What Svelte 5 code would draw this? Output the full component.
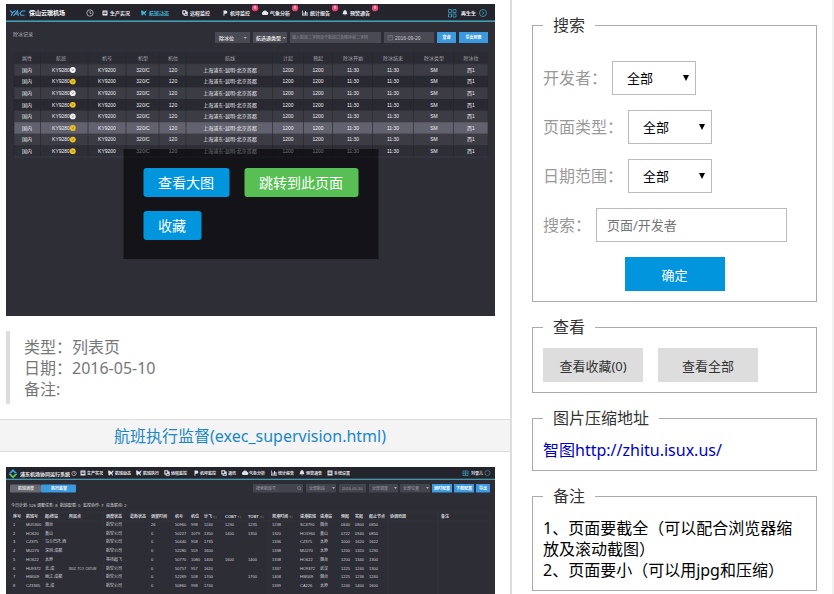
<script>
  const nav = [
    { x: 110, text: '生产实况', icon: 'list' },
    { x: 149, text: '航班动态', icon: 'plane', active: true },
    { x: 190, text: '远程监控', icon: 'copy' },
    { x: 230, text: '机坪监控', icon: 'flag', badge: true },
    { x: 270, text: '气象分析', icon: 'cloud', badge: true },
    { x: 310, text: '统计报告', icon: 'chart', badge: true },
    { x: 350, text: '预警通告', icon: 'bell', badge: true }
  ];
  const columns = [
    { x: 27, head: '属性', cell: '国内' },
    { x: 61, head: '航班', cell: 'KY9280' },
    { x: 107, head: '机号', cell: 'KY9200' },
    { x: 143, head: '机型', cell: '320/C' },
    { x: 173, head: '机位', cell: '120' },
    { x: 230, head: '航线', cell: '上海浦东-昆明-北京首都' },
    { x: 288, head: '计起', cell: '1200' },
    { x: 318, head: '预起', cell: '1200' },
    { x: 353, head: '除冰开始', cell: '11:30' },
    { x: 393, head: '除冰结束', cell: '11:30' },
    { x: 434, head: '除冰类型', cell: 'SM' },
    { x: 471, head: '除冰位', cell: '西1' }
  ];
  const lines = [14, 40.5, 88, 126, 159, 186, 272.5, 303.5, 332.5, 372.5, 413.5, 453.5, 488];
  const rows = [0, 1, 2, 3, 4, 5, 6, 7].map((i) => ({
    y: 70 + i * 11.6,
    fill: i === 5 ? '#62626e' : i === 7 ? '#2e2e37' : i % 2 ? '#292931' : '#3c3c45',
    dot: i === 0 || i === 2 || i === 4 ? '#f4f4f4' : '#f1c40f'
  }));

  const nav2 = [
    { x: 87, text: '生产实况', icon: 'list' },
    { x: 115, text: '航班动态', icon: 'plane' },
    { x: 143, text: '航班执行', icon: 'plane' },
    { x: 171, text: '远程监控', icon: 'copy' },
    { x: 200, text: '机坪监控', icon: 'flag' },
    { x: 228, text: '通讯', icon: 'copy' },
    { x: 249, text: '气象分析', icon: 'cloud' },
    { x: 278, text: '统计报告', icon: 'chart' },
    { x: 306, text: '预警通告', icon: 'bell' },
    { x: 334, text: '系统设置', icon: 'list' }
  ];
  const filters = [
    { x: 253, w: 50, text: '搜索航班号' },
    { x: 306, w: 30, text: '全部航段' },
    { x: 339, w: 27, text: '2016-05-10' },
    { x: 369, w: 29, text: '全部调度' },
    { x: 400, w: 30, text: '全部位置' },
    { x: 432, w: 20, text: '调时配置', blue: true },
    { x: 454, w: 20, text: '下载配置', blue: true },
    { x: 476, w: 14, text: '导出', blue: true }
  ];
  const stats = [
    { x: 11, text: '今日计划: 526' }, { x: 37, text: '调整任务: 8' }, { x: 60, text: '航班配载: 5' },
    { x: 83, text: '监控协作: 7' }, { x: 106, text: '应急联动: 2' }
  ];
  const x2 = [13, 26, 45, 69, 106, 130, 151, 175, 191, 204, 225, 248, 272, 300, 320, 341, 355, 369, 390, 441];
  const head2 = ['序号', '航班号', '起/终站', '所属点', '调度状态', '最新状态', '调整时间', '机号', '机位', '计飞 ↑↓', 'COBT ↑↓', 'TOBT ↑↓', '离港时间 ↑↓', '进港航班', '进港站', '预起', '实起', '起止节点', '协调原因', '备注'];
  const body2 = [
    ['1', 'MU5300', '烟台', '', '航空公司', '', '26', '50960', '998', '1240', '1230', '1235', '1238', 'SC4790', '烟台', '0640', '0800', '0850'],
    ['2', 'HO620', '黄山', '', '航空公司', '', '0', '50227', '1079', '1350', '1400', '1350', '1320', 'HO1960', '黄山', '0722', '0940', '0850'],
    ['3', 'CZ375', '乌兰巴托-西', '', '航空公司', '', '0', '50440', '958', '1735', '', '', '1336', 'CZ375', '太原', '1000', '1620', '1622'],
    ['4', 'MU270', '深圳-成都', '', '航空公司', '', '0', '52280', '559', '1600', '', '', '1338', 'MU270', '太原', '1200', '1320', '1230'],
    ['5', 'HO622', '太原', '', '等待起飞', '', '0', '50770', '1080', '1400', '1600', '1400', '1338', 'HO622', '烟台', '1200', '1340', '1300'],
    ['6', 'HU9372', '北-成', 'WUZ, TCO, CNTUM', '航空公司', '', '0', '50757', '957', '1620', '', '', '1337', 'HO9372', '武汉', '1225', '1240', '1300'],
    ['7', 'HW009', '丽江-成都', '', '航空公司', '', '0', '52269', '558', '1700', '', '1700', '1408', 'HW009', '烟台', '1225', '1236', '1240'],
    ['8', 'CZ3365', '北-成', '', '航空公司', '', '0', '50860', '998', '1740', '', '', '1339', 'CA226', '太原', '1240', '1400', '1600']
  ];

  const selects = [
    { id: 'dev', label: '开发者：' },
    { id: 'kind', label: '页面类型：' },
    { id: 'range', label: '日期范围：' }
  ];
</script>

{#snippet icon(kind, x, y, color)}
  <g transform="translate({x} {y})" fill={color} stroke="none">
    {#if kind === 'list'}
      <path d="M-2.5-2.5h5v5h-5zM-1.5-1.3v.7h3v-.7zM-1.5.2v.7h3V.2z" fill-rule="evenodd" />
    {:else if kind === 'plane'}
      <path d="M-3-2.5l2 .2 1 1.3 2-1.6.8.3L1.2.2l1 2.6-.8-.2L0 .9l-1.5 1-.2 1-.8-1.2z" />
    {:else if kind === 'copy'}
      <path d="M-2.7-2.7h4v1.2h1.4v4.2h-4V1.4h-1.4zM-1.6-1.7v2h1.8v-2zM-.2 1v.7h2V1z" fill-rule="evenodd" />
    {:else if kind === 'flag'}
      <path d="M-1.5-2.5h2.3a1.6 1.6 0 0 1 0 3.2H-.6v2h-.9z" />
    {:else if kind === 'cloud'}
      <path d="M-2 2a1.6 1.6 0 0 1-.2-3 2.3 2.3 0 0 1 4.2-.3A1.7 1.7 0 0 1 2.2 2z" />
    {:else if kind === 'chart'}
      <path d="M-3-2.5h.7v4.3H3v.7h-6zM-1.5-.5h1v2h-1zM0-2h1v3.5H0zM1.5-1h1v2.5h-1z" />
    {:else}
      <path d="M0-2.7c2.2 0 1.6 2.8 2.5 4h-5C-1.6.1-2.2-2.7 0-2.7zM-.8 1.7h1.6L0 2.6z" />
    {/if}
  </g>
{/snippet}

<div class="page">
  <main class="gallery">
    <div class="thumb">
      <svg viewBox="6 4 489 312" role="img" aria-label="列表页">
        <rect x="6" y="4" width="489" height="312" fill="#2e2e37" />
        <rect x="6" y="4" width="489" height="17" fill="#24242c" />
        <rect x="6" y="20.5" width="489" height="1.3" fill="#4ab8d2" />
        <path d="M10 10.500l2.500 2.300 3-2.300M12.500 12.800l-1.200 3M13.500 15.800l4-5 .8 5M15.500 14h3M25.500 11h-3.500l-2 2.300 1 2h3.500" fill="none" stroke="#4aa8e0" stroke-width="1.1" />
        <text class="brand" x="29" y="15.2">保山云瑞机场</text>
        <g fill="none" stroke="#d8d8dc" stroke-width=".7">
          <circle cx="90" cy="13" r="3.2" /><path d="M90 11v2.300h1.500" />
        </g>
        {#each nav as n}
          {@render icon(n.icon, n.x - 5, 13, n.active ? '#3fb4d8' : '#e8e8ec')}
          <text class="t5 strong" x={n.x} y="15" fill={n.active ? '#3fb4d8' : '#e8e8ec'}>{n.text}</text>
          {#if n.badge}
            <circle cx={n.x + 25} cy="8" r="3.2" fill="#ee4472" />
            <text class="t4 mid" x={n.x + 25} y="9.4" fill="#fff">8</text>
          {/if}
        {/each}
        <path d="M448.500 9.500h3v3h-3zM453 9.500h3v3h-3zM448.500 14h3v3h-3zM453 14h3v3h-3z" fill="none" stroke="#3fa0c4" stroke-width=".8" />
        <text class="t5 strong" x="461" y="15" fill="#e8e8ec">再生生</text>
        <circle cx="483" cy="13" r="3.5" fill="none" stroke="#3fb4d8" stroke-width=".7" />
        <path d="M482 11.500l2 1.500-2 1.500" fill="none" stroke="#3fb4d8" stroke-width=".6" />

        <text class="t5" x="13" y="36" fill="#b4b4bc">除冰记录</text>
        <g fill="#4a4a54">
          <rect x="215" y="32" width="35" height="11" /><rect x="253" y="32" width="34" height="11" />
          <rect x="290" y="32" width="91" height="11" /><rect x="384" y="32" width="50" height="11" />
        </g>
        <path d="M243.500 37h3.500l-1.750 2zM282.500 37h3.500l-1.750 2z" fill="#aaa" />
        <text class="t5 strong" x="219" y="39.5" fill="#ddd">除冰位</text>
        <text class="t5 strong" x="256" y="39.5" fill="#ddd">航选通类型</text>
        <text class="t4" x="292" y="39" fill="#8a8a94">输入航班二字码及于航班口及降序前二字码</text>
        <path d="M388 35.500h4.500v4.500H388zM388 37h4.500" fill="none" stroke="#888" stroke-width=".5" />
        <text class="t5" x="395" y="39.5" fill="#c4c4cc">2016-09-20</text>
        <rect x="437" y="32" width="19" height="11" fill="#3b99e0" />
        <rect x="459" y="32" width="29" height="11" fill="#3b99e0" />
        <text class="t4 mid strong" x="446.5" y="39" fill="#fff">查询</text>
        <text class="t4 mid strong" x="473.5" y="39" fill="#fff">导出到表</text>

        <rect x="14" y="51" width="474" height="13" fill="#2b2b34" stroke="#3a3a44" stroke-width=".5" />
        {#each rows as r}
          <rect x="14" y={r.y - 5.8} width="474" height="11.6" fill={r.fill} />
        {/each}
        <path d={lines.map((x) => `M${x} 51V157`).join('')} stroke="#25252d" stroke-width=".6" />
        <path d="M14 157H488" stroke="#4a4a54" stroke-width=".5" />
        {#each columns as c}
          <text class="t5 mid" x={c.x} y="59.5" fill="#a4a4ac">{c.head}</text>
          {#each rows as r}
            <text class="t5 mid" x={c.x} y={r.y + 1.8} fill="#ececf0">{c.cell}</text>
          {/each}
        {/each}
        {#each rows as r}
          <circle cx="72.8" cy={r.y} r="2.9" fill={r.dot} />
          <path d="M71.800 {r.y - 1}l1 2 1-2" fill="none" stroke="#777766" stroke-width=".5" />
        {/each}
      </svg>
      <div class="actions">
        <button type="button">查看大图</button>
        <button type="button" class="go">跳转到此页面</button>
        <button type="button">收藏</button>
      </div>
    </div>
    <div class="meta">
      <div>类型：列表页</div>
      <div>日期：2016-05-10</div>
      <div>备注:</div>
    </div>
    <h2><a href="#exec">航班执行监督(exec_supervision.html)</a></h2>
    <div class="thumb" id="exec">
      <svg viewBox="6 467 489 312" role="img" aria-label="航班执行监督">
        <rect x="6" y="467" width="489" height="312" fill="#2d2d36" />
        <rect x="6" y="467" width="489" height="12" fill="#24242c" />
        <rect x="6" y="478.7" width="489" height="1.2" fill="#4aa4b8" />
        <path d="M13 469l4.500 4.500h-2.500l-2-2-2 2H8.500z" fill="#3aa0e0" />
        <path d="M8.500 474h2.500l2 2 2-2h2.500l-4.500 4.500z" fill="#5cc45c" />
        <text class="t5 strong" x="20" y="475.5" fill="#eee">浦东机场协同运行系统</text>
        <circle cx="74" cy="473.5" r="2.2" fill="none" stroke="#ddd" stroke-width=".6" />
        <path d="M74 472v1.700h1" fill="none" stroke="#ddd" stroke-width=".5" />
        {#each nav2 as n}
          {@render icon(n.icon, n.x - 4, 473, '#e0e0e4')}
          <text class="t4 strong" x={n.x} y="474.8" fill="#e0e0e4">{n.text}</text>
        {/each}
        <path d="M463 471h5v4.500h-5zM463 473.200h5M465.500 471v4.500" fill="none" stroke="#3fa0c4" stroke-width=".7" />
        <text class="t4 strong" x="471" y="474.8" fill="#ddd">刘雪儿</text>
        <circle cx="487.5" cy="473" r="2.6" fill="none" stroke="#4a9ab0" stroke-width=".6" />

        <rect x="10" y="484.5" width="31" height="8" rx="1" fill="#686870" />
        <rect x="41" y="484.5" width="35" height="8" rx="1" fill="#3b99e0" />
        <text class="t4 mid strong" x="26" y="490" fill="#ddd">航班调度</text>
        <text class="t4 mid strong" x="59" y="490" fill="#fff">执行监督</text>
        {#each filters as f}
          <rect x={f.x} y="484" width={f.w} height="8.5" fill={f.blue ? '#3b99e0' : '#44444e'} />
          <text class="t4" class:mid={f.blue} class:strong={f.blue} x={f.blue ? f.x + f.w / 2 : f.x + 3} y="489.8" fill={f.blue ? '#fff' : '#a0a0a8'}>{f.text}</text>
        {/each}
        <circle cx="299" cy="488" r="1.5" fill="none" stroke="#999" stroke-width=".5" />
        <path d="M300 489l1.200 1.200" stroke="#999" stroke-width=".5" />
        <path d="M332 487h3l-1.500 2zM394 487h3l-1.500 2zM426 487h3l-1.500 2z" fill="#aaa" />
        {#each stats as s}
          <text class="t4" x={s.x} y="506.5" fill="#ddd">{s.text}</text>
        {/each}

        <path d="M10 512H490M10 521H490" stroke="#393943" stroke-width=".5" />
        <path d="M103 512v82M256 512v82M269 512v82M388 512v82M438 512v82M490 512v82" stroke="#393943" stroke-width=".5" />
        {#each head2 as h, i}
          <text class="t4 strong" x={x2[i]} y="518" fill="#d4d4d8">{h}</text>
        {/each}
        {#each body2 as row, r}
          {#each row as cell, i}
            <text class={i === 3 ? 't3' : 't4'} x={x2[i]} y={526 + r * 8.7} fill="#d0d0d6">{cell}</text>
          {/each}
        {/each}
      </svg>
    </div>
  </main>

  <aside class="side">
    <form onsubmit={(e) => e.preventDefault()}>
      <fieldset>
        <legend>搜索</legend>
        {#each selects as s}
          <div class="row">
            <label for={s.id}>{s.label}</label>
            <span class="pick">
              <select id={s.id}><option>全部</option></select>
            </span>
          </div>
        {/each}
        <div class="row">
          <label for="word">搜索：</label>
          <input id="word" type="text" placeholder="页面/开发者" />
        </div>
        <div class="row center">
          <button type="submit" class="primary">确定</button>
        </div>
      </fieldset>
    </form>
    <fieldset>
      <legend>查看</legend>
      <div class="pair">
        <button type="button">查看收藏(0)</button>
        <button type="button">查看全部</button>
      </div>
    </fieldset>
    <fieldset>
      <legend>图片压缩地址</legend>
      <a class="zhitu" href="http://zhitu.isux.us/">智图http://zhitu.isux.us/</a>
    </fieldset>
    <fieldset>
      <legend>备注</legend>
      <div>1、页面要截全（可以配合浏览器缩放及滚动截图）</div>
      <div>2、页面要小（可以用jpg和压缩）</div>
    </fieldset>
  </aside>
</div>

<style>
  .page {
    display: flex;
    height: 100vh;
    box-sizing: border-box;
    border-right: 2px solid #f0f0f0;
    background: #fff;
    color: #000;
    font: 16px/21px "Noto Sans", "Noto Sans CJK SC", sans-serif;
  }
  .page * { box-sizing: border-box; }
  .gallery, .side {
    overflow-y: auto;
    scrollbar-width: none;
  }
  .gallery {
    flex: 1;
    min-width: 0;
    padding-top: 4px;
  }
  .thumb {
    position: relative;
    margin: 0 15px 15px 6px;
  }
  .thumb svg { display: block; width: 100%; height: auto; }
  svg text { font-family: "Liberation Sans", "Noto Sans CJK SC", sans-serif; }
  svg .brand { font-size: 6px; font-weight: 700; fill: #fff; }
  svg .t5 { font-size: 5px; }
  svg .t4 { font-size: 4px; }
  svg .t3 { font-size: 3px; }
  svg .mid { text-anchor: middle; }
  svg .strong { font-weight: 700; }
  .actions {
    position: absolute;
    top: 145px;
    left: 50%;
    transform: translateX(-50%);
    display: flex;
    flex-wrap: wrap;
    gap: 14px 15px;
    width: 255px;
    padding: 19px 20px;
    background: rgba(0, 0, 0, 0.55);
  }
  button {
    border: 0;
    margin: 0;
    font-family: inherit;
    cursor: pointer;
  }
  .actions button {
    padding: 4px 15px;
    border-radius: 3px;
    background: #0095dd;
    color: #fff;
    font-size: 14px;
    line-height: 21px;
  }
  .actions .go { background: #57bf53; }
  .meta {
    margin: 0 15px 15px 6px;
    padding: 6px 14px 4px;
    border-left: 4px solid #ddd;
    color: #777;
  }
  h2 {
    margin: 0 0 15px;
    padding: 6px 10px 4px 0;
    border: 1px solid #ddd;
    border-width: 1px 0;
    background: #f4f4f4;
    font-size: 16px;
    font-weight: 400;
    line-height: 21px;
    text-align: center;
  }
  h2 a { color: #1a87c9; text-decoration: none; }
  .side {
    flex: 0 0 322px;
    padding: 15px 15px 0 20px;
    border-left: 2px solid #ddd;
  }
  fieldset {
    min-width: 0;
    margin: 0 0 15px;
    padding: 11px 10px 9px;
    border: 1px solid #aaa;
  }
  legend { padding: 0 10px; color: #333; }
  .row {
    display: flex;
    align-items: center;
    gap: 5px;
    margin-top: 15px;
  }
  .row:first-of-type { margin-top: 14px; }
  .center { justify-content: center; padding-bottom: 1px; }
  label { color: #999; }
  .pick { position: relative; }
  .pick::after {
    content: "";
    position: absolute;
    top: 14px;
    right: 7px;
    border: solid transparent;
    border-width: 6px 3px 0;
    border-top-color: #000;
    pointer-events: none;
  }
  select, input {
    display: block;
    height: 34px;
    margin: 0;
    border: 1px solid #bbb;
    border-radius: 0;
    background: #fff;
    color: #000;
    font-family: inherit;
    font-size: 13px;
  }
  select { width: 84px; padding: 0 14px; appearance: none; }
  input { width: 191px; padding: 0 10px; }
  input::placeholder { color: #757575; }
  .primary, .pair button {
    width: 100px;
    height: 34px;
    padding: 0;
    font-size: 13px;
  }
  .primary { background: #0095dd; color: #fff; }
  .pair { display: flex; gap: 15px; margin: -1px 0 1px; }
  .pair button { background: #ddd; color: #333; }
  .zhitu { display: block; color: #0000cc; text-decoration: none; }
</style>
